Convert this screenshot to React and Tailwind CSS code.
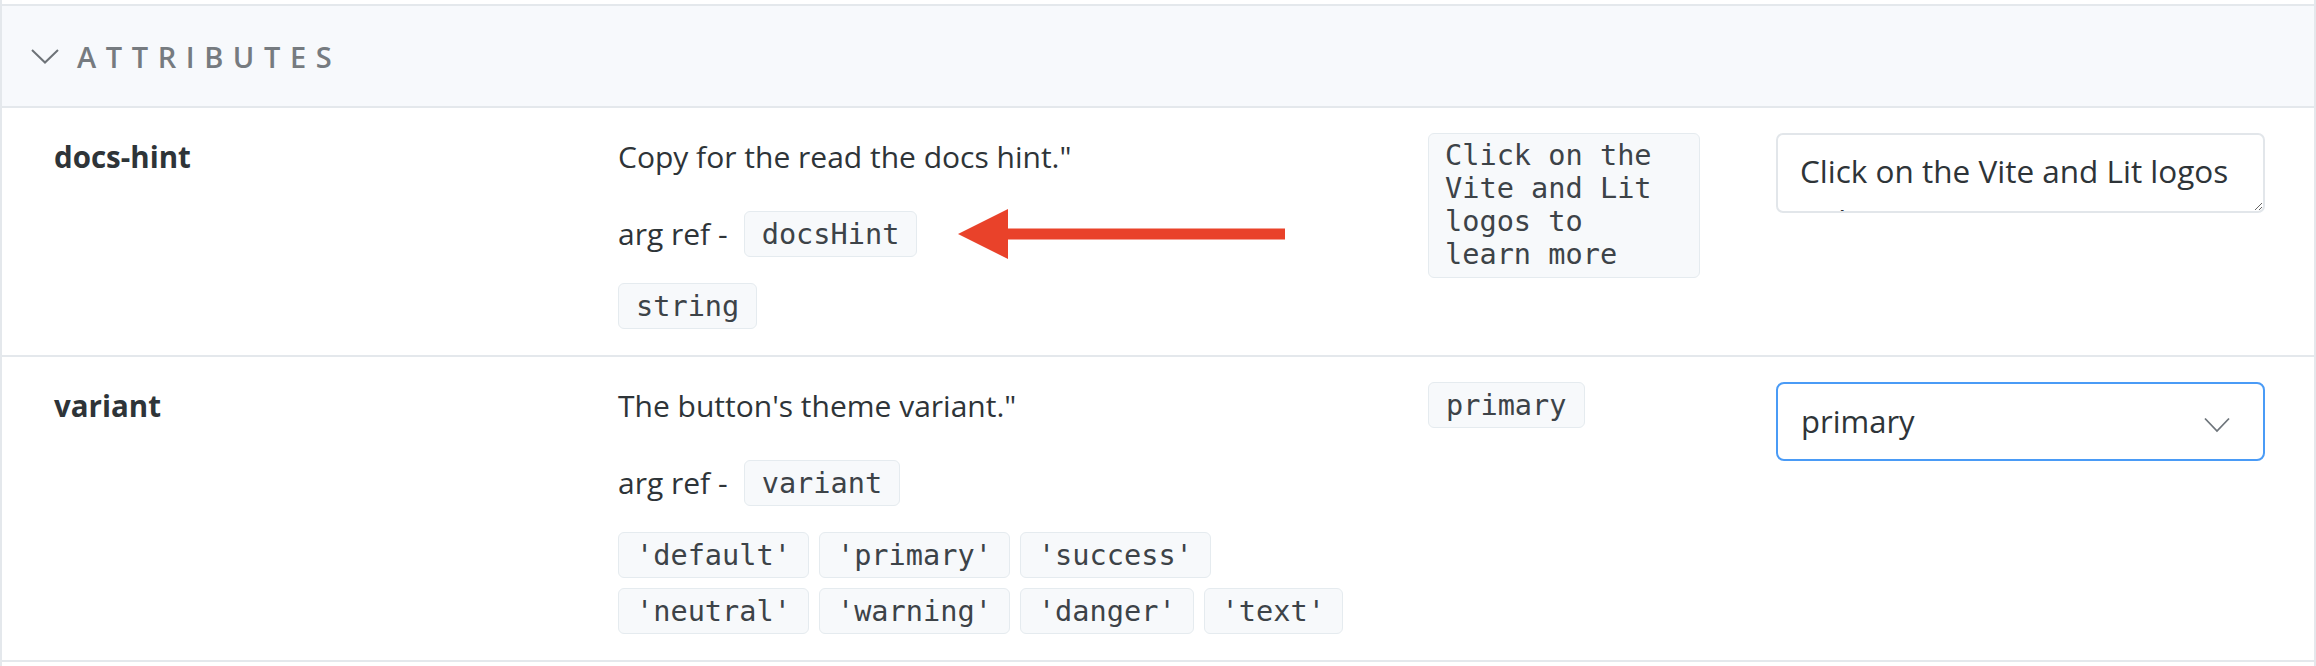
import React from "react";

const SANS = "font-['Open_Sans','Noto_Sans',sans-serif]";
const MONO = "font-['DejaVu_Sans_Mono','Liberation_Mono',monospace]";

function Tag({ children }) {
  return (
    <span
      className={`inline-flex items-center h-[46px] px-[17px] border border-[#e5ebef] bg-[#f7f9fb] rounded-[6px] ${MONO} text-[28.6px] leading-none text-[#3d4348] whitespace-pre`}
    >
      {children}
    </span>
  );
}

function Row({ label, desc, argRef, types, def, control }) {
  return (
    <div className="grid grid-cols-[590px_810px_348px_1fr] border-b-2 border-[#e4e8ec]">
      <div className="pl-[52px] pr-[26px] pt-[26px] pb-[26px]">
        <div className="text-[29.5px] leading-[46px] font-bold text-[#2e3438]">{label}</div>
      </div>
      <div className="px-[26px] pt-[26px] pb-[26px]">
        <p className="text-[30px] leading-[46px] text-[#2e3438]">{desc}</p>
        <div className="mt-[31px] flex items-center gap-[16px] text-[30px] leading-[46px] text-[#2e3438]">
          <span>arg ref -</span>
          <Tag>{argRef}</Tag>
        </div>
        <div className="mt-[26px] flex flex-col gap-[10px]">
          {types.map((line, i) => (
            <div key={i} className="flex flex-wrap gap-[10px]">
              {line.map((t) => (
                <Tag key={t}>{t}</Tag>
              ))}
            </div>
          ))}
        </div>
      </div>
      <div className="px-[26px] pt-[25px] pb-[26px]">{def}</div>
      <div className="pl-[26px] pr-[49px] pt-[25px] pb-[26px]">{control}</div>
    </div>
  );
}

export default function App() {
  return (
    <div className={`relative w-[2316px] h-[666px] bg-white overflow-hidden ${SANS}`}>
      <div className="h-full border-l-2 border-r-2 border-[#e4e8ec] pt-[4px]">
        {/* section header */}
        <div className="h-[104px] border-y-2 border-[#e4e8ec] bg-[#f7f9fc] flex items-center pl-[28px]">
          <svg width="30" height="18" viewBox="0 0 30 18" className="mr-[17px]">
            <polyline points="2,3 15,15.5 28,3" fill="none" stroke="#6e7378" strokeWidth="2" />
          </svg>
          <span className="text-[29px] font-semibold tracking-[0.33em] text-[#767b80] leading-none">
            ATTRIBUTES
          </span>
        </div>

        <Row
          label="docs-hint"
          desc={'Copy for the read the docs hint."'}
          argRef="docsHint"
          types={[["string"]]}
          def={
            <div
              className={`w-[272px] border border-[#e5ebef] bg-[#f7f9fb] rounded-[6px] px-[16px] pt-[5px] pb-[6px] ${MONO} text-[28.6px] leading-[33px] text-[#3d4348]`}
            >
              <div>Click on the</div>
              <div>Vite and Lit</div>
              <div>logos to</div>
              <div>learn more</div>
            </div>
          }
          control={
            <textarea
              readOnly
              defaultValue="Click on the Vite and Lit logos to learn more"
              className="block w-full h-[80px] border-2 border-[#e2e6ea] rounded-[7px] px-[22px] pt-[11px] pb-0 text-[31.5px] leading-[50px] text-[#2e3438] bg-white outline-none overflow-hidden"
            />
          }
        />
        <Row
          label="variant"
          desc={"The button's theme variant.\""}
          argRef="variant"
          types={[
            ["'default'", "'primary'", "'success'"],
            ["'neutral'", "'warning'", "'danger'", "'text'"],
          ]}
          def={<Tag>primary</Tag>}
          control={
            <div className="relative h-[79px] border-2 border-[#4a9bf6] rounded-[8px] flex items-center pl-[23px] text-[31px] text-[#2e3438]">
              <span>primary</span>
              <svg
                width="26"
                height="16"
                viewBox="0 0 26 16"
                className="absolute right-[33px] top-[33px]"
              >
                <polyline points="1,1.5 13,14 25,1.5" fill="none" stroke="#6e757b" strokeWidth="1.8" />
              </svg>
            </div>
          }
        />
      </div>

      {/* red annotation arrow */}
      <svg
        className="absolute left-[956px] top-[207px]"
        width="332"
        height="54"
        viewBox="0 0 332 54"
      >
        <polygon points="2,27 52,2 52,52" fill="#e9422a" />
        <rect x="50" y="21.5" width="279" height="11" fill="#e9422a" />
      </svg>
    </div>
  );
}
